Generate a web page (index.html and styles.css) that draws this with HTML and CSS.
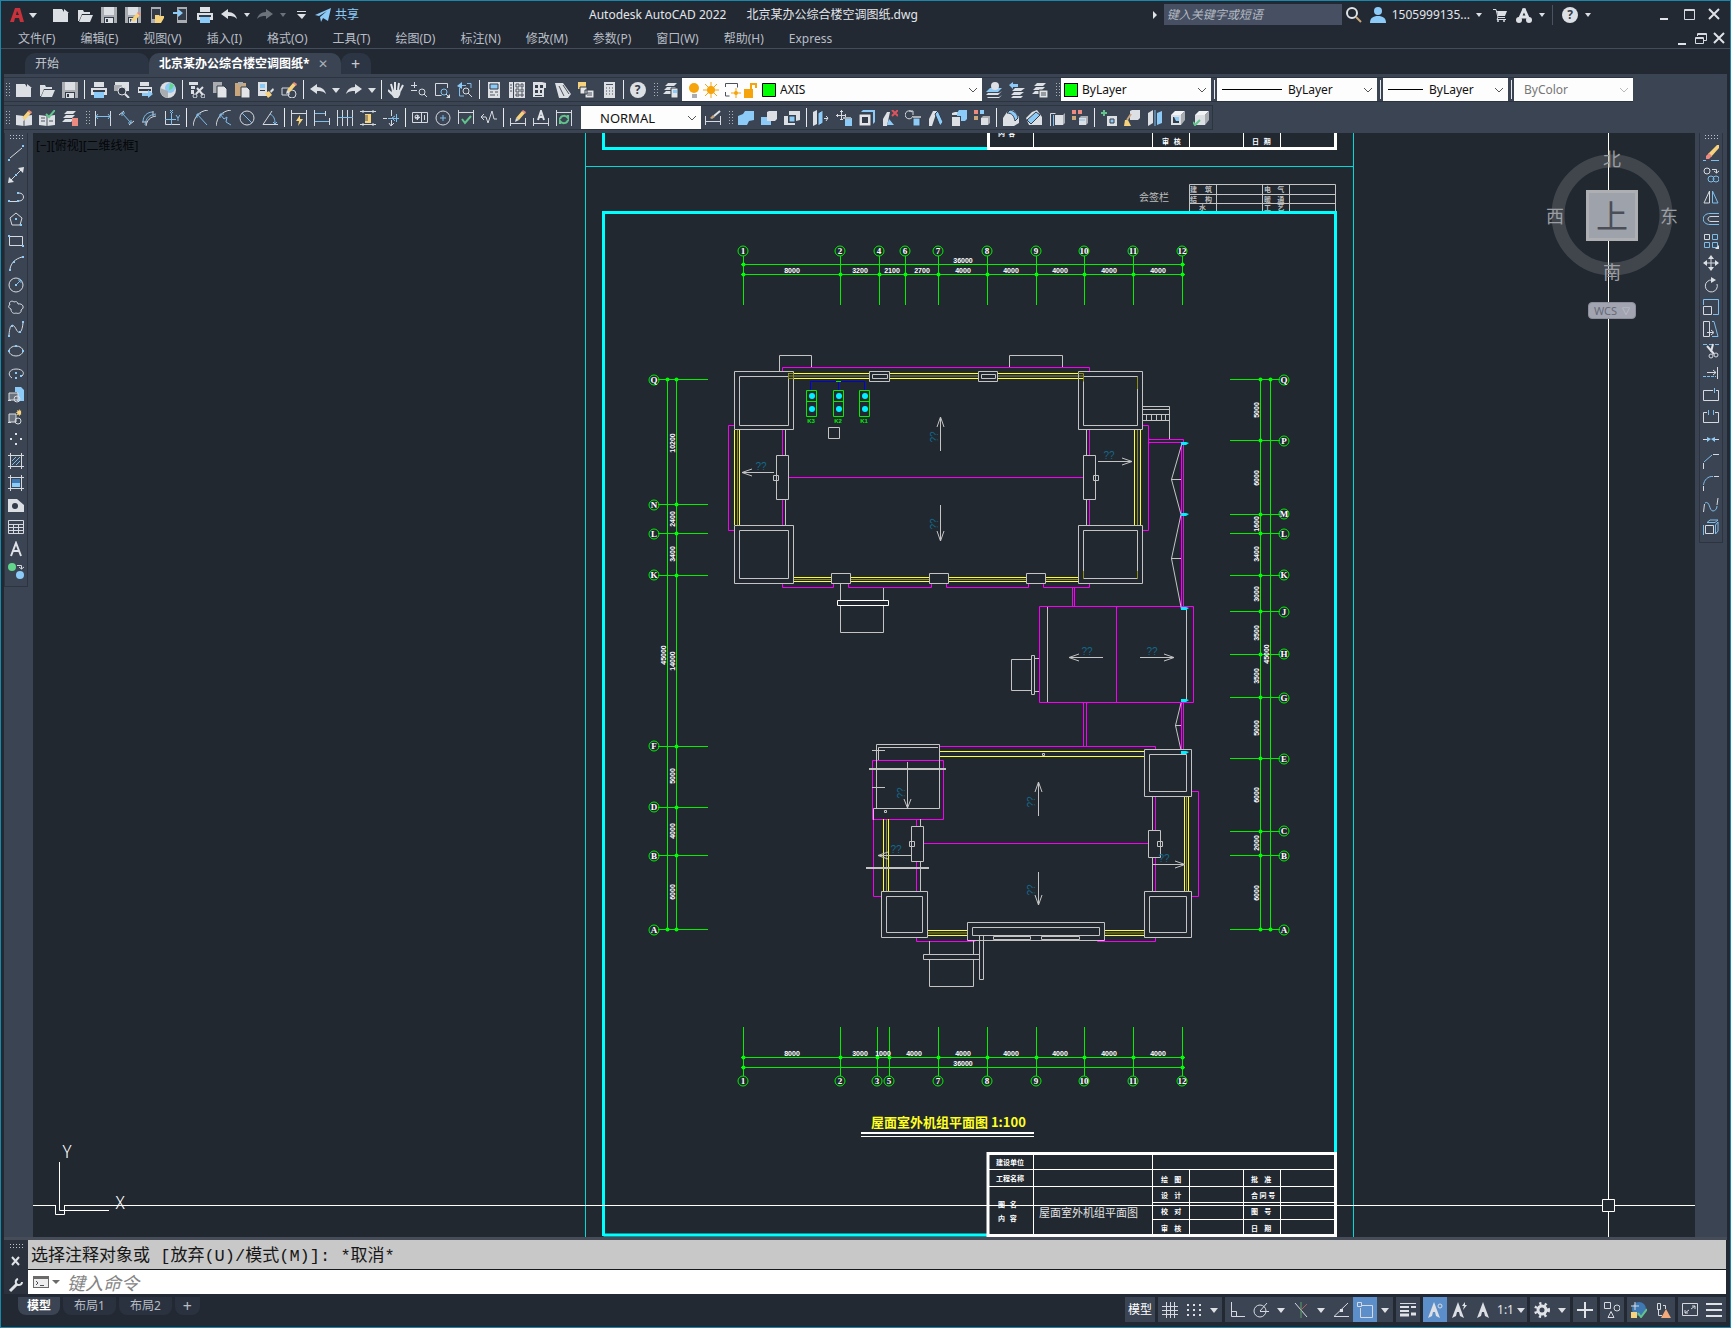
FILE: index.html
```html
<!DOCTYPE html>
<html lang="zh-CN">
<head>
<meta charset="utf-8">
<title>Autodesk AutoCAD 2022</title>
<link rel="stylesheet" href="styles.css">
</head>
<body>
<svg class="defs" aria-hidden="true">
  <symbol id="new"><path class="wf" d="M0 2h9l2 3 4 1v9H0z"/><path class="wf" d="M11 2l5 4h-5z"/></symbol>
  <symbol id="open"><path class="wf" d="M1 14V3h5l1 2h6v2H5L2 14z"/><path class="wf" d="M5 8h11l-3 7H2z"/></symbol>
  <symbol id="save"><path class="gf" d="M0 0h16v16H0z"/><path class="wf" d="M3 0h10v8H3z"/><path class="df" d="M3 10h10v6H3z"/><path class="wf" d="M4 11h8v5H4z"/><path class="df" d="M5 12h2v3H5z"/></symbol>
  <symbol id="print"><path class="wf" d="M3 0h10v5H3zM0 6h16v7H0z"/><path class="df" d="M2 8h12v2H2z"/><path class="bf" d="M3 10h10v6H3z"/></symbol>
  <symbol id="undo"><path class="wf" d="M0 7l7-5v3c5 0 8 3 9 7-3-3-5-3-9-3v3z"/></symbol>
  <symbol id="redo"><path class="wf" d="M16 7L9 2v3c-5 0-8 3-9 7 3-3 5-3 9-3v3z"/></symbol>
  <symbol id="caret"><path class="wf" d="M0 6h8l-4 5z"/></symbol>
  <symbol id="caretsm"><path class="wf" d="M0 4h6l-3 4z"/></symbol>
  <symbol id="chev"><path class="chevline" d="M0 5l4 4 4-4"/></symbol>
  <symbol id="cube"><path class="wf" d="M1 5h10v10H1z"/><path class="sf" d="M1 5l4-4h10l-4 4z"/><path class="gf" d="M11 5l4-4v9l-4 5z"/></symbol>
  <symbol id="smallcube"><path class="wf" d="M7 8h7v7H7z"/><path class="gf" d="M7 8l2-2h7l-2 2zM14 8l2-2v7l-2 2z"/></symbol>
  <symbol id="layers"><path class="wf" d="M5 1h9l-3 3H2zM4 5h9l-3 3H1zM3 9h9l-3 3H0z"/></symbol>
  <symbol id="pencil"><path class="yf" d="M6 8l6-7 3 2-6 7z"/><path class="rf" d="M12 1l1-1 3 2-1 2z"/><path class="wf" d="M6 8l3 2-4 2z"/></symbol>
  <symbol id="spark"><path class="yf" d="M10 0l1 3 3-1-1 3 3 1-3 1 1 3-3-1-1 3-1-3-3 1 1-3-3-1 3-1-1-3 3 1z"/></symbol>
  <symbol id="annot"><path class="wf" d="M8 0l6 16-4-2-1-4H7l-1 4-4 2z"/></symbol>
</svg>

<div class="app">
<header class="titlebar">
  <div class="quick">
    <button class="logo" aria-label="应用程序菜单"><svg class="ic"><path class="logoa" d="M1 15L6 1h5l4 14h-4l-1-4H6l-1 4zM7 8h3L8 4z"/></svg><svg class="ca"><use href="#caret"/></svg></button>
    <button class="q" aria-label="新建"><svg class="ic"><use href="#new"/></svg></button>
    <button class="q" aria-label="打开"><svg class="ic"><use href="#open"/></svg></button>
    <button class="q" aria-label="保存"><svg class="ic"><use href="#save"/></svg></button>
    <button class="q" aria-label="另存为"><svg class="ic"><use href="#save"/><use href="#pencil" y="5"/></svg></button>
    <button class="q" aria-label="从移动设备打开"><svg class="ic"><path class="gf" d="M2 0h10v16H2z"/><path class="df" d="M3 2h8v10H3z"/><path class="yf" d="M6 8h4l1 1h4v2l-3 5H6z"/></svg></button>
    <button class="q" aria-label="保存到移动设备"><svg class="ic"><path class="gf" d="M4 0h10v16H4z"/><path class="df" d="M5 2h8v11H5z"/><path class="bf" d="M0 5h5V2l5 4-5 4V7H0z"/></svg></button>
    <button class="q" aria-label="打印"><svg class="ic"><use href="#print"/></svg></button>
    <button class="q" aria-label="放弃"><svg class="ic"><use href="#undo"/></svg></button>
    <button class="qc" aria-label="放弃列表"><svg class="ca sm"><use href="#caretsm"/></svg></button>
    <button class="q dim-icon" aria-label="重做"><svg class="ic"><use href="#redo"/></svg></button>
    <button class="qc dim-icon" aria-label="重做列表"><svg class="ca sm"><use href="#caretsm"/></svg></button>
    <button class="q" aria-label="自定义"><svg class="ic"><path class="wf" d="M4 4h9v1H4zM4 7h9l-4 5z"/></svg></button>
    <button class="share"><svg class="ic"><path class="bf" d="M0 8L16 1l-3 13-5-3-2 4-1-5 7-6-8 5z"/></svg>共享</button>
  </div>
  <h1 class="title"><span>Autodesk AutoCAD 2022</span><span>北京某办公综合楼空调图纸.dwg</span></h1>
  <div class="account">
    <span class="play"></span>
    <input class="search" type="text" aria-label="搜索" placeholder="键入关键字或短语">
    <button class="q" aria-label="查找"><svg class="ic"><circle class="ln2" cx="6" cy="6" r="5"/><path class="tan" d="M10 10l5 5"/></svg></button>
    <button class="user"><svg class="ic"><circle class="bf" cx="8" cy="4" r="4"/><path class="bf" d="M0 16c0-5 3-7 8-7s8 2 8 7z"/></svg>1505999135...<svg class="ca sm"><use href="#caretsm"/></svg></button>
    <button class="q" aria-label="购物车"><svg class="ic"><path class="ln1" d="M1 2.500h3l2 8h7"/><path class="wf" d="M5 4h10l-2 5H6z"/><path class="ln1" d="M6 10l-1 2.500h9"/><circle class="wf" cx="6" cy="14" r="1"/><circle class="wf" cx="12" cy="14" r="1"/></svg></button>
    <button class="q" aria-label="Autodesk App Store"><svg class="ic"><path class="ln3" d="M8 2L3 13M8 2l5 11M4 10h7"/><circle class="wf" cx="8" cy="3" r="2"/><circle class="wf" cx="3" cy="13" r="3"/><circle class="wf" cx="13" cy="13" r="3"/></svg></button>
    <button class="qc" aria-label="应用列表"><svg class="ca sm"><use href="#caretsm"/></svg></button>
    <span class="vline"></span>
    <button class="q" aria-label="帮助"><span class="help">?</span></button>
    <button class="qc" aria-label="帮助列表"><svg class="ca sm"><use href="#caretsm"/></svg></button>
  </div>
  <div class="winctl">
    <button aria-label="最小化"><svg class="ic"><path class="ln2" d="M2 12h8"/></svg></button>
    <button aria-label="最大化"><svg class="ic"><path class="ln1" d="M2.500 2.500h10v10h-10zM2 3.500h11"/></svg></button>
    <button aria-label="关闭"><svg class="ic"><path class="ln2" d="M3 2l10 10M13 2L3 12"/></svg></button>
  </div>
</header>
<nav class="menubar">
  <a href="#">文件(F)</a><a href="#">编辑(E)</a><a href="#">视图(V)</a><a href="#">插入(I)</a><a href="#">格式(O)</a><a href="#">工具(T)</a><a href="#">绘图(D)</a><a href="#">标注(N)</a><a href="#">修改(M)</a><a href="#">参数(P)</a><a href="#">窗口(W)</a><a href="#">帮助(H)</a><a href="#">Express</a>
  <div class="docctl">
    <button aria-label="最小化文档"><svg class="ic"><path class="ln2" d="M3 13h8"/></svg></button>
    <button aria-label="还原文档"><svg class="ic"><path class="ln1" d="M4.500 5V2.500h9v7H11M2.500 6.500h8v6h-8zM2 7.500h9M4 3.500h10"/></svg></button>
    <button aria-label="关闭文档"><svg class="ic"><path class="ln2" d="M3 2l10 10M13 2L3 12"/></svg></button>
  </div>
</nav>
<div class="tabs">
  <button class="tab">开始</button>
  <button class="tab on">北京某办公综合楼空调图纸*<span class="x">✕</span></button>
  <button class="tab add" aria-label="新图形">+</button>
</div>

<div class="bars">
  <div class="bar">
    <span class="grip"></span>
    <button class="t" aria-label="新建"><svg class="ic"><use href="#new"/></svg></button>
    <button class="t" aria-label="打开"><svg class="ic"><use href="#open"/></svg></button>
    <button class="t" aria-label="保存"><svg class="ic"><use href="#save"/></svg></button>
    <span class="sep"></span>
    <button class="t" aria-label="打印"><svg class="ic"><use href="#print"/></svg></button>
    <button class="t" aria-label="打印预览"><svg class="ic"><path class="wf" d="M1 0h14v9H1z"/><path class="gf" d="M0 3h8v6H0z"/><circle class="dfs" cx="8" cy="9" r="4"/><path class="ln2" d="M11 12l4 4"/></svg></button>
    <button class="t" aria-label="发布"><svg class="ic"><path class="wf" d="M3 0h9v4H3zM1 5h14v6H1z"/><path class="df" d="M2 7h12v2H2z"/><path class="bf" d="M5 11h6V8l5 4-5 4v-2H5z"/></svg></button>
    <button class="t" aria-label="三维打印"><svg class="ic"><circle class="wf" cx="8" cy="8" r="8"/><circle class="bf" cx="10" cy="6" r="5"/><path class="grn" d="M10 1l4 2-2 4-3 1z"/><path class="gf" d="M0 6l8 3v7C3 15 0 12 0 6z"/></svg></button>
    <span class="sep"></span>
    <button class="t" aria-label="剪切"><svg class="ic"><path class="wf" d="M0 0h9v3H0zM2 4h4v3H2zM2 8h3v4H2z"/><path class="ln2" d="M8 6l6 7M14 5L7 12"/><circle class="ln1" cx="6" cy="14" r="2"/><circle class="ln1" cx="14" cy="14" r="2"/></svg></button>
    <button class="t" aria-label="复制"><svg class="ic"><path class="gf" d="M1 0h9v11H1z"/><path class="wfd" d="M5 4h7l3 3v9H5z"/></svg></button>
    <button class="t" aria-label="粘贴"><svg class="ic"><path class="tanf" d="M0 1h11v13H0z"/><path class="gf" d="M3 0h5v3H3z"/><path class="wfd" d="M6 5h6l3 3v8H6z"/></svg></button>
    <button class="t" aria-label="特性匹配"><svg class="ic"><path class="wf" d="M0 0h9v14H0z"/><path class="bf" d="M2 2h5v4H2z"/><path class="df" d="M2 8h5v1H2z"/><path class="yf" d="M7 11l4-2 3 4-4 3z"/><path class="wf" d="M12 9l3-3 1 2-3 3z"/></svg></button>
    <button class="t" aria-label="块编辑器"><svg class="ic"><path class="ln1" d="M1 6h7v7H1z"/><circle class="ln1" cx="11" cy="12" r="4"/><use href="#pencil"/></svg></button>
    <span class="sep"></span>
    <button class="t" aria-label="放弃"><svg class="ic"><use href="#undo"/></svg></button>
    <button class="tc" aria-label="放弃列表"><svg class="ca"><use href="#caret"/></svg></button>
    <button class="t" aria-label="重做"><svg class="ic"><use href="#redo"/></svg></button>
    <button class="tc" aria-label="重做列表"><svg class="ca"><use href="#caret"/></svg></button>
    <span class="sep"></span>
    <button class="t" aria-label="平移"><svg class="ic"><path class="ln2" d="M5 9L3 2M7 8V0M10 8l1-7M12 9l3-6M4 12L0 8"/><path class="wf" d="M4 8h9l-1 5-2 3H6l-3-4z"/></svg></button>
    <button class="t" aria-label="实时缩放"><svg class="ic"><path class="ln1" d="M0 3.500h6M3.500 0v6M0 8.500h6"/><circle class="ln1" cx="11" cy="10" r="3"/><path class="ln1" d="M13 12l3 3"/></svg></button>
    <button class="t" aria-label="窗口缩放"><svg class="ic"><path class="ln1" d="M13.500 6V1.500h-12v12h6"/><circle class="bl" cx="10" cy="10" r="3"/><path class="ln1" d="M12 12l2 2"/><path class="wf" d="M16 12v4h-4z"/></svg></button>
    <button class="t" aria-label="缩放上一个"><svg class="ic"><path class="bl" d="M2.500 6v8H7M10 1.500h4V6M2 3.500h7"/><path class="bf" d="M0 4l5-4v7z"/><circle class="ln1" cx="9" cy="9" r="3"/><path class="ln1" d="M11 11l4 4"/></svg></button>
    <span class="sep"></span>
    <button class="t" aria-label="特性"><svg class="ic"><path class="wf" d="M2 0h12v16H2z"/><path class="bfd" d="M4 2h8v5H4z"/><path class="dk" d="M4 10h3M9 10h3M4 13h5M11 13h1"/></svg></button>
    <button class="t" aria-label="设计中心"><svg class="ic"><path class="wf" d="M0 0h4v16H0zM5 0h11v16H5z"/><path class="dk" d="M7 2h3v3H7zM12 2h2v3h-2zM7 7h3v3H7zM12 7h2v3h-2zM7 12h3v2H7zM12 12h2v2h-2zM1 3h2M1 6h2M1 9h2"/></svg></button>
    <button class="t" aria-label="工具选项板"><svg class="ic"><path class="wf" d="M1 0h9l4 1v5h-2v9H1z"/><path class="df" d="M3 3h3v3H3zM8 3h3v3H8zM3 8h3v3H3zM8 8h2v3H8zM3 13h7v1H3z"/></svg></button>
    <button class="t" aria-label="图纸集"><svg class="ic"><path class="wf" d="M0 1h8l8 11-3 4H4z"/><path class="dk" d="M8 3l6 9M4 4l5 10"/></svg></button>
    <button class="t" aria-label="标记集"><svg class="ic"><path class="yf" d="M0 0h8v7H0z"/><path class="wfd" d="M2 5h7v7H2zM7 8h9v8H7z"/><path class="dk" d="M9 11h5M9 13h5"/></svg></button>
    <button class="t" aria-label="计算器"><svg class="ic"><path class="wf" d="M3 0h11v16H3z"/><path class="dk" d="M5 2.500h7M5 6h1M8 6h1M11 6h1M5 9h1M8 9h1M11 9h1M5 12h1M8 12h1M11 12h1"/></svg></button>
    <span class="sep"></span>
    <button class="t" aria-label="帮助"><span class="help">?</span></button>
    <span class="grip wide"></span>
    <button class="t" aria-label="图层特性"><svg class="ic"><use href="#layers"/><path class="wfd" d="M8 6h7v10H8z"/><path class="bf" d="M10 8h4v3h-4z"/></svg></button>
    <div class="combo layer">
      <svg class="lic" aria-hidden="true"><circle class="or" cx="8" cy="6" r="5"/><path class="gf" d="M6 12h5v4H6z"/><circle class="or" cx="25" cy="8" r="4"/><path class="ors" d="M25 0v16M17 8h16M19 2l12 12M31 2L19 14"/><path class="dk" d="M39.500 5v-3.500h3M48 1.500h3.500v4M39.500 10v4h4M41 1.500h8"/><circle class="or" cx="50" cy="11" r="2"/><path class="ors" d="M50 6v10M45 11h10"/><path class="or" d="M58 7h9v9h-9z"/><path class="ors2" d="M65 7V2h5v4"/><path class="swatch" d="M76.500 1.500h13v13h-13z"/></svg>
      <select aria-label="图层"><option>AXIS</option></select><svg class="ch"><use href="#chev"/></svg>
    </div>
    <button class="t" aria-label="置为当前图层"><svg class="ic"><path class="bf" d="M4 6h12l-4 4H0z"/><circle class="wf" cx="9" cy="4" r="4"/><path class="wf" d="M2 11h11l3-2-4 4H0zM2 15h11l3-2-4 4H0z"/></svg></button>
    <button class="t" aria-label="上一个图层"><svg class="ic"><path class="bf" d="M0 3l4-3v2h5v3H4v2z"/><path class="wf" d="M6 6h10l-4 3H3zM5 10h10l-4 3H2zM4 14h10l-2 2H2z"/></svg></button>
    <button class="t" aria-label="图层状态"><svg class="ic"><use href="#layers"/><path class="wfd" d="M7 8h9v8H7z"/><path class="dk" d="M9 11h5M9 13h5"/></svg></button>
    <span class="grip wide"></span>
    <div class="combo color"><span class="sw"></span><select aria-label="颜色"><option>ByLayer</option></select><svg class="ch"><use href="#chev"/></svg></div>
    <span class="split"></span>
    <div class="combo ltype"><span class="dash"></span><select aria-label="线型"><option>ByLayer</option></select><svg class="ch"><use href="#chev"/></svg></div>
    <span class="split"></span>
    <div class="combo lweight"><span class="dash"></span><select aria-label="线宽"><option>ByLayer</option></select><svg class="ch"><use href="#chev"/></svg></div>
    <span class="split"></span>
    <div class="combo plot"><select aria-label="打印样式" disabled><option>ByColor</option></select><svg class="ch"><use href="#chev"/></svg></div>
  </div>

  <div class="bar fit">
    <span class="grip"></span>
    <button class="t" aria-label="编辑参照"><svg class="ic"><path class="wf" d="M0 5l8 1 8-1v10l-8 1-8-1z"/><path class="dk" d="M8 6v10"/><use href="#pencil"/></svg></button>
    <button class="t" aria-label="保存参照"><svg class="ic"><path class="wf" d="M0 5l8 1 8-1v10l-8 1-8-1z"/><path class="dk" d="M8 6v10M2 8h4M2 11h4M10 11h4"/><path class="gs" d="M7 4l3 3 6-7"/></svg></button>
    <button class="t" aria-label="关闭参照"><svg class="ic"><use href="#layers"/><path class="rf" d="M10 8h6v8h-6z"/></svg></button>
    <span class="grip wide"></span>
    <button class="t" aria-label="线性标注"><svg class="ic"><path class="ln1" d="M.5 1v15M15.500 1v15"/><path class="bl" d="M1 6.500h14M3 4L1 6.500 3 9M13 4l2 2.500L13 9"/></svg></button>
    <button class="t" aria-label="对齐标注"><svg class="ic"><path class="ln1" d="M1 5l5-4M11 15l5-4"/><path class="bl" d="M4 3l9 10M4 6V3h3M13 10v3h-3"/></svg></button>
    <button class="t" aria-label="弧长标注"><svg class="ic"><path class="ln1" d="M1 12h5M12 1v5M5 16C6 10 9 7 15 6"/><path class="bl" d="M2 12C2 6 6 2 12 2M4 15C5 8 8 5 15 4"/></svg></button>
    <button class="t" aria-label="坐标标注"><svg class="ic"><path class="ln1" d="M1.500 1v13.500H16"/><path class="bl" d="M1 9.500h11M7.500 3v12M6 0l3 3M9 0L6 3M12 5l2 3 2-3M14 8v3"/></svg></button>
    <span class="sep"></span>
    <button class="t" aria-label="半径标注"><svg class="ic"><path class="ln1" d="M15 0C6 1 1 7 0 16"/><path class="bl" d="M4 4l10 11M4 8V4h4"/></svg></button>
    <button class="t" aria-label="折弯标注"><svg class="ic"><path class="ln1" d="M15 0C6 1 1 7 0 16"/><path class="bl" d="M4 4l4 5 3-2-1 5 5 3M4 8V4h4"/></svg></button>
    <button class="t" aria-label="直径标注"><svg class="ic"><circle class="ln1" cx="8" cy="8" r="7"/><path class="bl" d="M3 3l10 10"/></svg></button>
    <button class="t" aria-label="角度标注"><svg class="ic"><path class="ln1" d="M10 1L1 14.500h15"/><path class="bl" d="M8 4c4 2 5 5 5 10M11 12l2 2 2-2"/></svg></button>
    <span class="sep"></span>
    <button class="t" aria-label="快速标注"><svg class="ic"><path class="ln1" d="M.5 0v16M15.500 0v16M1 3.500h14"/><path class="yf" d="M9 5L5 11h3l-1 5 5-7H9z"/></svg></button>
    <button class="t" aria-label="基线标注"><svg class="ic"><path class="ln1" d="M.5 0v16M11.500 1v5M15.500 8v7"/><path class="bl" d="M1 3.500h10M1 11.500h14"/></svg></button>
    <button class="t" aria-label="连续标注"><svg class="ic"><path class="ln1" d="M.5 0v16M5.500 0v16M10.500 0v16M15.500 0v16"/><path class="bl" d="M1 7.500h15"/></svg></button>
    <button class="t" aria-label="等距标注"><svg class="ic"><path class="ln1" d="M0 1.500h16M0 14.500h16M3 0v3M13 0v3M3 13v3M13 13v3"/><path class="yf" d="M5 4h6v9H5z"/><path class="dk" d="M5 6h3M5 8h3M5 10h3"/></svg></button>
    <button class="t" aria-label="折断标注"><svg class="ic"><path class="ln1" d="M8.500 0v6M8.500 10v6M6 13l2 3 3-3M0 8.500h4"/><path class="bl" d="M5 8.500h11M13.500 4v8M12 6l-3 2 3 3"/></svg></button>
    <span class="sep"></span>
    <button class="t" aria-label="公差"><svg class="ic"><path class="ln1" d="M.5 2.500h15v10H.5zM9.500 2v10M3 7.500h5M5.500 5v5M12.500 5v5"/><circle class="ln1" cx="5" cy="7" r="2"/></svg></button>
    <button class="t" aria-label="圆心标记"><svg class="ic"><circle class="ln1" cx="8" cy="8" r="7"/><path class="bl" d="M8 5v6M5 8h6"/></svg></button>
    <button class="t" aria-label="检验"><svg class="ic"><path class="ln1" d="M.5 0v14M15.500 0v14M1 2.500h14"/><path class="gs" d="M4 9l3 4 6-7"/></svg></button>
    <button class="t" aria-label="折弯线性"><svg class="ic"><path class="ln1" d="M0 7h5l2 6 4-12 2 8h3M3 4L0 7l3 3"/></svg></button>
    <span class="sep"></span>
    <button class="t" aria-label="编辑标注"><svg class="ic"><path class="ln1" d="M.5 8v8M15.500 8v8M1 13.500h14"/><use href="#pencil"/></svg></button>
    <button class="t" aria-label="编辑标注文字"><svg class="ic"><path class="ln1" d="M.5 8v8M15.500 8v8M1 13.500h14"/><path class="ln2" d="M5 10l3-9 3 9M6 7h4"/></svg></button>
    <button class="t" aria-label="标注更新"><svg class="ic"><path class="ln1" d="M.5 0v16M15.500 0v16M1 2.500h14"/><path class="gs" d="M4 9c1-4 6-4 8-1V5M12 10c-1 4-6 4-8 1v3"/></svg></button>
    <div class="combo dimstyle"><select aria-label="标注样式"><option>NORMAL</option></select><svg class="ch"><use href="#chev"/></svg></div>
    <button class="t" aria-label="标注样式管理"><svg class="ic"><path class="ln1" d="M.5 6v9M15.500 6v9M1 11.500h14"/><path class="tanf" d="M5 8l3-3 2 2-3 2z"/><path class="ln2" d="M9 6l6-5"/></svg></button>
    <span class="grip wide"></span>
    <button class="t" aria-label="并集"><svg class="ic"><path class="bf" d="M0 6l5-2 2-3h9v9l-5 1-2 4H0z"/></svg></button>
    <button class="t" aria-label="差集"><svg class="ic"><path class="bf" d="M0 7h6v4h4v4H0z"/><path class="wf" d="M6 2l2-1h8v8l-2 2H6z"/></svg></button>
    <button class="t" aria-label="交集"><svg class="ic"><path class="wf" d="M5 1h11v9l-4 1V5H5zM0 6h4v7h7v2H0z"/><path class="bfd" d="M5 6h6v6H5z"/></svg></button>
    <span class="sep"></span>
    <button class="t" aria-label="拉伸面"><svg class="ic"><path class="wf" d="M0 2l4-2v14l-4 2z"/><path class="bfd" d="M5 3l5-3v13l-5 3z"/><path class="ln1" d="M11 8.500h4M13 6l2 2-2 3"/></svg></button>
    <button class="t" aria-label="移动面"><svg class="ic"><path class="ln1" d="M5.500 0v10M0 5.500h10M4 1.500h3M1.500 4v3M9.500 4v3M4 9.500h3"/><path class="bf" d="M9 8h7v8H9z"/><path class="gf" d="M7 7h8v2H7z"/></svg></button>
    <button class="t" aria-label="偏移面"><svg class="ic"><path class="wfd" d="M0 4h12v12H0z"/><path class="df" d="M3 7h6v6H3z"/><path class="bf" d="M2 2l2-2h12v12l-2 2V2z"/></svg></button>
    <button class="t" aria-label="删除面"><svg class="ic"><path class="wf" d="M1 9l4-7h3l-3 14H1z"/><path class="bf" d="M7 9l5 6H5z"/><path class="rs" d="M10 0l6 6M16 0l-6 6"/></svg></button>
    <button class="t" aria-label="旋转面"><svg class="ic"><path class="ln1" d="M7 2a4 4 0 1 0 1 4M4 1h4v4"/><path class="bfd" d="M8 8h7v8H8z"/><path class="gf" d="M8 6h8v2H8z"/></svg></button>
    <button class="t" aria-label="倾斜面"><svg class="ic"><path class="wf" d="M1 9l4-8h4l-5 15H1z"/><path class="bfd" d="M7 4l3-3 5 11-3 4z"/></svg></button>
    <button class="t" aria-label="复制面"><svg class="ic"><path class="wf" d="M4 2h4L6 5H1V3zM1 7h8v9H1z"/><path class="bf" d="M6 3l2-3h8v9l-2 2h-4V6H6z"/></svg></button>
    <button class="t" aria-label="着色面"><svg class="ic"><path class="rf" d="M0 0h4v4H0z"/><path class="bf" d="M6 0h4v4H6z"/><path class="tanf" d="M0 6h4v4H0z"/><use href="#smallcube"/></svg></button>
    <span class="sep"></span>
    <button class="t" aria-label="圆角边"><svg class="ic"><path class="wf" d="M0 8l4-6 6-2 6 7v6l-5 3H0z"/><path class="bfd" d="M4 3c5 0 7 3 8 8l3-3C14 3 11 1 7 0z"/></svg></button>
    <button class="t" aria-label="倒角边"><svg class="ic"><path class="wf" d="M0 8l6-6 5-2 5 7v8H3z"/><path class="bfd" d="M1 10l9-8 4 3-9 9z"/></svg></button>
    <button class="t" aria-label="复制边"><svg class="ic"><path class="ln1" d="M1.500 16V3.500h5"/><path class="bl" d="M4.500 16V5"/><path class="wf" d="M6 5h8v10H6z"/><path class="gf" d="M14 5l2-2v10l-2 2z"/></svg></button>
    <button class="t" aria-label="着色边"><svg class="ic"><path class="rf" d="M0 0h4v4H0zM6 0h4v4H6z"/><path class="tanf" d="M0 6h4v4H0z"/><use href="#smallcube"/><path class="bl" d="M7 10h6"/></svg></button>
    <span class="sep"></span>
    <button class="t" aria-label="压印"><svg class="ic"><path class="gs" d="M3 0v6M0 3h6"/><path class="wf" d="M6 6h10v10H6z"/><path class="bfd" d="M9 9h4v4H9z"/></svg></button>
    <button class="t" aria-label="清除"><svg class="ic"><path class="wf" d="M6 1l2-1h8v8l-2 2H6z"/><path class="yf" d="M1 10h3l3 6H0z"/><path class="tan" d="M3 10l4-6"/></svg></button>
    <button class="t" aria-label="分割"><svg class="ic"><path class="wf" d="M1 3l5-3v13l-5 3z"/><path class="bl" d="M8 0v16"/><path class="bf" d="M10 3l5-2v12l-5 2z"/></svg></button>
    <button class="t" aria-label="抽壳"><svg class="ic"><use href="#cube"/><path class="df" d="M3 7h6v6H3z"/><path class="bf" d="M4 7h5v4H6z"/></svg></button>
    <button class="t" aria-label="检查"><svg class="ic"><use href="#cube" x="1"/><path class="gs" d="M0 12l2 3 5-5"/></svg></button>
  </div>
</div>

<main class="work">
  <aside class="rail left">
    <span class="hgrip"></span>
    <button class="v" aria-label="直线"><svg class="ic"><path class="ln1" d="M2 13L14 3"/><path class="bf" d="M0 14h2v2H0zM14 0h2v2h-2z"/></svg></button>
    <button class="v" aria-label="构造线"><svg class="ic"><path class="ln1" d="M1 15L15 1"/><path class="wf" d="M0 16l1-6 5 5zM16 0l-1 6-5-5z"/><path class="bf" d="M7 7h2v2H7z"/></svg></button>
    <button class="v" aria-label="多段线"><svg class="ic"><path class="ln1" d="M2 12.500h7M11 4c6 0 6 8 0 8"/><path class="bf" d="M0 11h2v2H0zM9 3h2v2H9zM9 11h2v2H9z"/></svg></button>
    <button class="v" aria-label="多边形"><svg class="ic"><path class="ln1" d="M8 2l6 5-2 7H4L2 7z"/><path class="bf" d="M7 7h2v2H7zM12 13h2v2h-2z"/></svg></button>
    <button class="v" aria-label="矩形"><svg class="ic"><path class="ln1" d="M1.500 3.500h13v9h-13z"/><path class="bf" d="M0 2h2v2H0zM14 12h2v2h-2z"/></svg></button>
    <button class="v" aria-label="圆弧"><svg class="ic"><path class="ln1" d="M2 14c1-6 5-10 12-12"/><path class="bf" d="M1 14h2v2H1zM5 6h2v2H5zM14 1h2v2h-2z"/></svg></button>
    <button class="v" aria-label="圆"><svg class="ic"><circle class="ln1" cx="8" cy="8" r="7"/><path class="bl" d="M8 8l5-5M10 3h3v3"/><path class="bf" d="M7 7h2v2H7z"/></svg></button>
    <button class="v" aria-label="修订云线"><svg class="ic"><path class="ln1" d="M3 10c-3-1-3-4-1-4-2-3 2-5 4-3 2-1 4 0 4 2 5-1 7 4 3 6 1 3-3 4-5 3-2 1-5 0-5-4z"/></svg></button>
    <button class="v" aria-label="样条曲线"><svg class="ic"><path class="ln1" d="M1 14C2 0 6 4 8 8c3 6 6 4 7-6"/><path class="bf" d="M0 14h2v2H0zM3 4h2v2H3zM11 10h2v2h-2zM14 0h2v2h-2z"/></svg></button>
    <button class="v" aria-label="椭圆"><svg class="ic"><ellipse class="ln1" cx="8" cy="8" rx="7" ry="5"/><path class="bf" d="M0 7h2v2H0zM14 7h2v2h-2zM7 2h2v2H7z"/></svg></button>
    <button class="v" aria-label="椭圆弧"><svg class="ic"><path class="ln1" d="M4 13C-1 10 1 4 8 4s9 4 6 7"/><path class="bf" d="M7 7h2v2H7zM7 12h2v2H7zM12 10h2v2h-2z"/></svg></button>
    <button class="v" aria-label="插入块"><svg class="ic"><path class="bf" d="M7 0h6l3 3v11H9V5H7z"/><path class="fillbox" d="M1 6h9v7H1z"/><path class="ln1" d="M0 13.500h3"/><circle class="ln1" cx="9" cy="12" r="3"/></svg></button>
    <button class="v" aria-label="创建块"><svg class="ic"><path class="fillbox" d="M1 5h7v8H1z"/><path class="ln1" d="M0 13.500h3"/><circle class="ln1" cx="10" cy="12" r="3"/><svg x="6" y="0" width="10" height="8" viewBox="3 0 13 13"><use href="#spark"/></svg></svg></button>
    <button class="v" aria-label="点"><svg class="ic"><path class="wf" d="M7 2h2v2H7zM2 7h2v2H2zM12 7h2v2h-2zM7 12h2v2H7z"/></svg></button>
    <button class="v" aria-label="图案填充"><svg class="ic"><path class="ln1" d="M0 2.500h16M0 13.500h16M2.500 0v16M13.500 0v16"/><path class="bl" d="M4 8l4-4M4 12l8-8M8 12l4-4"/></svg></button>
    <button class="v" aria-label="渐变色"><svg class="ic"><path class="ln1" d="M0 2.500h16M0 13.500h16M2.500 0v16M13.500 0v16"/><path class="bd" d="M4 4h8v4H4z"/><path class="bf" d="M4 8h8v4H4z"/></svg></button>
    <button class="v" aria-label="面域"><svg class="ic"><path class="wf" d="M0 2h9l7 6v7H0z"/><circle class="df" cx="7" cy="9" r="3"/></svg></button>
    <button class="v" aria-label="表格"><svg class="ic"><path class="ln1" d="M.5 1.500h15v13H.5zM0 5.500h16M0 8.500h16M0 11.500h16M5.500 5v10M10.500 5v10"/></svg></button>
    <button class="v" aria-label="多行文字"><svg class="ic"><path class="ln2" d="M3 15L8 2l5 13M5 10h6"/></svg></button>
    <button class="v" aria-label="添加选定对象"><svg class="ic"><circle class="grn" cx="4" cy="4" r="4"/><circle class="bf" cx="12" cy="12" r="4"/><path class="ln1" d="M9 2.500h4.500V6M11 4l2.500 2L16 4"/></svg></button>
  </aside>

  <section class="canvas">
    <svg class="drawing" viewBox="33 133 1662 1104" preserveAspectRatio="xMidYMid slice">
      <!-- sheet borders -->
      <path class="cy" d="M585.500 133V1237M1353.500 133V1237M585 166.500H1354"/>
      <path class="cy thick" d="M603.500 133V148.500H988M603.500 1235H988M603.500 1236V212.500H1335.500V1153"/>
      <path class="wh thick" d="M988.500 133V148.500H1335.500V133M988 1153.500H1335.500V1235.500H988z"/>
      <path class="wh" d="M1033.500 133V148M1152.500 133V148M1189.500 133V148M1243.500 133V148M1280.500 133V148"/>
      <path class="wh" d="M988 1169.500H1336M988 1186.500H1336M1152 1202.500H1336M1152 1219.500H1336M1033.500 1153V1235M1152.500 1153V1235M1189.500 1169V1235M1243.500 1169V1235M1280.500 1169V1235"/>
      <path class="gy" d="M1189.500 211V184.500H1335.500V211M1189 194.500H1336M1189 203.500H1336M1216.500 184V211M1262.500 184V211M1289.500 184V211"/>
      <g class="cell"><text x="1162" y="144">审&#160;&#160;&#160;核</text><text x="1252" y="144">日&#160;&#160;&#160;期</text><text x="998" y="136">内&#160;&#160;容</text>
      <text x="996" y="1165">建设单位</text><text x="996" y="1181">工程名称</text><text x="998" y="1207">图&#160;&#160;&#160;名</text><text x="998" y="1221">内&#160;&#160;&#160;容</text>
      <text x="1161" y="1182">绘&#160;&#160;&#160;&#160;图</text><text x="1161" y="1198">设&#160;&#160;&#160;&#160;计</text><text x="1161" y="1214">校&#160;&#160;&#160;&#160;对</text><text x="1161" y="1231">审&#160;&#160;&#160;&#160;核</text>
      <text x="1251" y="1182">批&#160;&#160;&#160;&#160;准</text><text x="1251" y="1198">合 同 号</text><text x="1251" y="1214">图&#160;&#160;&#160;&#160;号</text><text x="1251" y="1231">日&#160;&#160;&#160;&#160;期</text></g>
      <g class="cell soft"><text x="1190" y="192">建&#160;&#160;&#160;&#160;&#160;筑</text><text x="1190" y="202">结&#160;&#160;&#160;&#160;&#160;构</text><text x="1199" y="210">水</text><text x="1264" y="192">电&#160;&#160;&#160;&#160;气</text><text x="1264" y="202">暖&#160;&#160;&#160;&#160;通</text><text x="1264" y="210">工&#160;&#160;&#160;&#160;艺</text></g>
      <text class="sign" x="1139" y="201">会签栏</text>
      <text class="sheetname" x="1039" y="1217">屋面室外机组平面图</text>

      <!-- axis grid, top and bottom -->
      <path class="gr" d="M741 264.500H1185M741 274.500H1185M743.500 256V305M840.500 256V305M879.500 256V305M905.500 256V305M938.500 256V305M987.500 256V305M1036.500 256V305M1084.500 256V305M1133.500 256V305M1182.500 256V305"/>
      <path class="gr" d="M741 1057.500H1185M741 1067.500H1185M743.500 1027V1076M840.500 1027V1076M877.500 1027V1076M889.500 1027V1076M938.500 1027V1076M987.500 1027V1076M1036.500 1027V1076M1084.500 1027V1076M1133.500 1027V1076M1182.500 1027V1076"/>
      <path class="gr" d="M667.500 379V930M676.500 379V930M658 379.500H708M658 504.500H708M658 533.500H708M658 575.500H708M658 746.500H708M658 807.500H708M658 855.500H708M658 929.500H708"/>
      <path class="gr" d="M1260.500 379V930M1270.500 379V930M1230 379.500H1280M1230 440.500H1280M1230 514.500H1280M1230 533.500H1280M1230 575.500H1280M1230 611.500H1280M1230 654.500H1280M1230 697.500H1280M1230 758.500H1280M1230 831.500H1280M1230 855.500H1280M1230 929.500H1280"/>
      <path class="tick" d="M743.500 274.500h0M840.500 274.500h0M879.500 274.500h0M905.500 274.500h0M938.500 274.500h0M987.500 274.500h0M1036.500 274.500h0M1084.500 274.500h0M1133.500 274.500h0M1182.500 274.500h0M743.500 264.500h0M1182.500 264.500h0M743.500 1057.500h0M840.500 1057.500h0M877.500 1057.500h0M889.500 1057.500h0M938.500 1057.500h0M987.500 1057.500h0M1036.500 1057.500h0M1084.500 1057.500h0M1133.500 1057.500h0M1182.500 1057.500h0M743.500 1067.500h0M1182.500 1067.500h0M667.500 379.500h0M676.500 379.500h0M676.500 504.500h0M676.500 533.500h0M676.500 575.500h0M676.500 746.500h0M676.500 807.500h0M676.500 855.500h0M676.500 929.500h0M667.500 929.500h0M1260.500 379.500h0M1270.500 379.500h0M1260.500 440.500h0M1260.500 514.500h0M1260.500 533.500h0M1260.500 575.500h0M1260.500 611.500h0M1260.500 654.500h0M1260.500 697.500h0M1260.500 758.500h0M1260.500 831.500h0M1260.500 855.500h0M1260.500 929.500h0M1270.500 929.500h0"/>
      <g class="bub">
        <circle cx="743" cy="251" r="5"/><circle cx="840" cy="251" r="5"/><circle cx="879" cy="251" r="5"/><circle cx="905" cy="251" r="5"/><circle cx="938" cy="251" r="5"/><circle cx="987" cy="251" r="5"/><circle cx="1036" cy="251" r="5"/><circle cx="1084" cy="251" r="5"/><circle cx="1133" cy="251" r="5"/><circle cx="1182" cy="251" r="5"/>
        <circle cx="743" cy="1081" r="5"/><circle cx="840" cy="1081" r="5"/><circle cx="877" cy="1081" r="5"/><circle cx="889" cy="1081" r="5"/><circle cx="938" cy="1081" r="5"/><circle cx="987" cy="1081" r="5"/><circle cx="1036" cy="1081" r="5"/><circle cx="1084" cy="1081" r="5"/><circle cx="1133" cy="1081" r="5"/><circle cx="1182" cy="1081" r="5"/>
        <circle cx="654" cy="380" r="5"/><circle cx="654" cy="505" r="5"/><circle cx="654" cy="534" r="5"/><circle cx="654" cy="575" r="5"/><circle cx="654" cy="746" r="5"/><circle cx="654" cy="807" r="5"/><circle cx="654" cy="856" r="5"/><circle cx="654" cy="930" r="5"/>
        <circle cx="1284" cy="380" r="5"/><circle cx="1284" cy="441" r="5"/><circle cx="1284" cy="514" r="5"/><circle cx="1284" cy="534" r="5"/><circle cx="1284" cy="575" r="5"/><circle cx="1284" cy="612" r="5"/><circle cx="1284" cy="654" r="5"/><circle cx="1284" cy="698" r="5"/><circle cx="1284" cy="759" r="5"/><circle cx="1284" cy="831" r="5"/><circle cx="1284" cy="856" r="5"/><circle cx="1284" cy="930" r="5"/>
      </g>
      <g class="axis">
        <text x="743" y="254">1</text><text x="840" y="254">2</text><text x="879" y="254">4</text><text x="905" y="254">6</text><text x="938" y="254">7</text><text x="987" y="254">8</text><text x="1036" y="254">9</text><text x="1084" y="254">10</text><text x="1133" y="254">11</text><text x="1182" y="254">12</text>
        <text x="743" y="1084">1</text><text x="840" y="1084">2</text><text x="877" y="1084">3</text><text x="889" y="1084">5</text><text x="938" y="1084">7</text><text x="987" y="1084">8</text><text x="1036" y="1084">9</text><text x="1084" y="1084">10</text><text x="1133" y="1084">11</text><text x="1182" y="1084">12</text>
        <text x="654" y="383">Q</text><text x="654" y="508">N</text><text x="654" y="537">L</text><text x="654" y="578">K</text><text x="654" y="749">F</text><text x="654" y="810">D</text><text x="654" y="859">B</text><text x="654" y="933">A</text>
        <text x="1284" y="383">Q</text><text x="1284" y="444">P</text><text x="1284" y="517">M</text><text x="1284" y="537">L</text><text x="1284" y="578">K</text><text x="1284" y="615">J</text><text x="1284" y="657">H</text><text x="1284" y="701">G</text><text x="1284" y="762">E</text><text x="1284" y="834">C</text><text x="1284" y="859">B</text><text x="1284" y="933">A</text>
      </g>
      <g class="dim">
        <text x="963" y="263">36000</text><text x="792" y="273">8000</text><text x="860" y="273">3200</text><text x="892" y="273">2100</text><text x="922" y="273">2700</text><text x="963" y="273">4000</text><text x="1011" y="273">4000</text><text x="1060" y="273">4000</text><text x="1109" y="273">4000</text><text x="1158" y="273">4000</text>
        <text x="963" y="1066">36000</text><text x="792" y="1056">8000</text><text x="860" y="1056">3000</text><text x="883" y="1056">1000</text><text x="914" y="1056">4000</text><text x="963" y="1056">4000</text><text x="1011" y="1056">4000</text><text x="1060" y="1056">4000</text><text x="1109" y="1056">4000</text><text x="1158" y="1056">4000</text>
        <g transform="rotate(-90)"><text x="-443" y="675">10200</text><text x="-519" y="675">2400</text><text x="-554" y="675">3400</text><text x="-661" y="675">14000</text><text x="-776" y="675">5000</text><text x="-831" y="675">4000</text><text x="-892" y="675">6000</text><text x="-655" y="666">45000</text>
        <text x="-410" y="1259">5000</text><text x="-478" y="1259">6000</text><text x="-524" y="1259">1600</text><text x="-554" y="1259">3400</text><text x="-594" y="1259">3000</text><text x="-633" y="1259">3500</text><text x="-676" y="1259">3500</text><text x="-728" y="1259">5000</text><text x="-795" y="1259">6000</text><text x="-843" y="1259">2000</text><text x="-893" y="1259">6000</text><text x="-654" y="1269">45000</text></g>
      </g>

      <!-- upper building -->
      <path class="mg" d="M782.500 372V367.500H1089.500V372M734 425.500H728.500V530.500H734M1142 425.500H1148.500V530.500H1142M782.500 430V455M782.500 500V525M1089.500 430V455M1089.500 500V525M789 477.500H1083M782.500 583V587.500H833.500V583M848.500 583V587.500H931.500V583M946.500 583V587.500H1028.500V583M1043.500 583V587.500H1089.500V583"/>
      <path class="gy" d="M779.500 372V355.500H811.500V367M1009.500 367V355.500H1062.500V367M785.500 430V525M1086.500 430V525"/>
      <path class="ye" d="M788 373.500H1083M788 378.500H1083M793 577.500H1079M793 581.500H1079M734.500 430V525M739.500 430V525M1134.500 430V525M1140.500 430V525"/>
      <path class="yeold" d="M788 376H1083M793 579.500H1079M737.500 430V525M1137.500 430V525"/>
      <path class="gy" d="M734.500 371.500h59v58h-59zM739.500 376.500h49v49h-49zM1078.500 371.500h64v58h-64zM1083.500 376.500h54v49h-54zM734.500 525.500h59v58h-59zM739.500 530.500h49v48h-49zM1078.500 525.500h64v58h-64zM1083.500 530.500h54v48h-54z"/>
      <path class="yeold" d="M788.500 373.500h5v5h-5zM1078.500 373.500h5v8M1137.500 377v12M1137.500 571v8M1083.500 571v8"/>
      <path class="gy bgf" d="M869.500 371.500h20v10h-20zM872.500 374.500h15v4h-15zM978.500 371.500h19v10h-19zM981.500 374.500h14v4h-14zM831.500 573.500h19v10h-19zM929.500 573.500h19v10h-19zM1026.500 573.500h19v10h-19zM776.500 455.500h12v44h-12zM1083.500 455.500h12v44h-12zM773.500 475.500h5v5h-5zM1093.500 475.500h5v5h-5zM828.500 427.500h11v11h-11z"/>
      <path class="gy" d="M940.500 451V418M937 427L940.500 417L944 427M940.500 505V541M937 531L940.500 541L944 531M774 472.500H742M752 469L742 472.500L752 476M1098 461.500H1132M1122 458L1132 461.500L1122 465"/>
      <path class="bu" d="M810.500 390V381.500H864.500V390M838.500 381V390"/>
      <path class="gr" d="M806.500 390.500h10v26h-10zM806 401.500h11M833.500 390.500h10v26h-10zM833 401.500h11M859.500 390.500h10v26h-10zM859 401.500h11M836 381.500h5"/>
      <g class="fan"><circle cx="812" cy="396" r="3"/><circle cx="812" cy="409" r="3"/><circle cx="839" cy="396" r="3"/><circle cx="839" cy="409" r="3"/><circle cx="865" cy="396" r="3"/><circle cx="865" cy="409" r="3"/></g>
      <g class="unit"><text x="811" y="423">K3</text><text x="838" y="423">K2</text><text x="864" y="423">K1</text></g>
      <path class="gy" d="M840.500 584V632.500H883.500V588M1142 406.500H1169.500V439M1142 409.500H1169M1142 414.500H1169M1142 420.500H1169M1146.500 414v6M1151.500 414v6M1156.500 414v6M1161.500 414v6M1165.500 414v6"/>
      <path class="wh bgf" d="M837.500 600.500h51v5h-51z"/>

      <!-- covered walk and link block -->
      <path class="mg" d="M1148 439.500H1183.500V606M1148 442.500H1181.500V606M1072.500 587V606M1074.500 587V606M1039.500 606.500h154v96h-154zM1116.500 606V702M1083.500 702V747M1086.500 702V747M1181.500 702V750M1183.500 702V750"/>
      <path class="gy" d="M1181.500 445L1171.500 479.500L1181 514.500L1171.500 558.500L1181.500 609.500H1186.500V700M1171 479.500H1181M1171 558.500H1181M1047.500 607V702M1181 703L1175.500 725.500L1181 750M1175 725.500H1181M1103 657.500H1069M1079 654L1069 657.500L1079 661M1140 657.500H1174M1164 654L1174 657.500L1164 661M1031 659.500H1011.500V690.500H1031M1031.500 655.500h3v39h-3zM1035 658.500H1039M1035 691.500H1039"/>
      <path class="cyan" d="M1181 442h5l3 1-3 2h-5zM1181 513h5l3 1-3 2h-5zM1181 607h5l3 1-3 2h-5zM1181 699h5l3 1-3 2h-5zM1181 751h5l3 1-3 2h-5z"/>

      <!-- lower building -->
      <path class="mg" d="M940 746.500H1155.500V750M872.500 760.500h71v59h-71zM873.500 819V896.500H881M916.500 819V826M916.500 862V891M924 843.500H1148M1155.500 797V830M1155.500 858V891M1192 791.500H1198.500V896.500H1192M916.500 938V941.500H975V937M1097.500 937V941.500H1155.500V938"/>
      <path class="ye" d="M940 751.500H1144M940 756.500H1144M883.500 819V891M888.500 819V891M1184.500 797V891M1188.500 797V891M927 930.500H967M927 935.500H967M1105 930.500H1144M1105 935.500H1144"/>
      <path class="yeold" d="M886.500 819V891M1186.500 797V891M927 933H967M1105 933H1144"/>
      <path class="gy" d="M1144.500 749.500h47v47h-47zM1149.500 754.500h37v37h-37zM881.500 891.500h46v46h-46zM886.500 896.500h36v36h-36zM1144.500 891.500h47v46h-47zM1149.500 896.500h37v36h-37zM876.500 744.500h63v64h-63zM878.500 760V747.500H938M873.500 820V808.500H877M872 750.500H885M872 787.500H885M920.500 819V826M920.500 862V891M1152.500 797V830M1152.500 858V891"/>
      <path class="gy thick2" d="M869 769H946M866 868H929"/>
      <path class="gy bgf" d="M911.500 826.500h12v35h-12zM909.500 841.500h5v5h-5zM1148.500 830.500h12v27h-12zM1157.500 841.500h5v5h-5zM967.500 922.500h137v18h-137zM972.500 927.500h127v8h-127zM993.500 936.500h37v3h-37zM1041.500 936.500h38v3h-38zM884.500 810.500h2v2h-2zM1042.500 753.500h2v2h-2z"/>
      <path class="gy" d="M907.500 762V808M904 799L907.500 808L911 799M911 855.500H878M888 852L878 855.500L888 859M1152 864.500H1185M1175 861L1185 864.500L1175 868M1038.500 816V782M1035 792L1038.500 782L1042 792M1038.500 872V905M1035 895L1038.500 905L1042 895M929.500 941V986.500H973.500V941M979.500 936V979.500H983.500V936"/>
      <path class="gy bgf" d="M923.500 954.500h56v5h-56z"/>
      <g class="slope"><text x="761" y="470">??</text><text x="1109" y="459">??</text><text x="1087" y="655">??</text><text x="1152" y="655">??</text><text x="896" y="853">??</text><text x="1164" y="862">??</text>
      <g transform="rotate(-90)"><text x="-437" y="938">??</text><text x="-524" y="938">??</text><text x="-793" y="905">??</text><text x="-802" y="1035">??</text><text x="-890" y="1035">??</text></g></g>

      <text class="caption" x="871" y="1127">屋面室外机组平面图 1:100</text>
      <path class="wh thick2" d="M861 1133H1034"/><path class="wh" d="M861 1136.500H1034"/>

      <!-- UCS icon and cursor -->
      <path class="wh" d="M59.500 1162V1210.500H109M55.500 1205V1214.500H64.500V1205"/>
      <text class="ucs" x="67" y="1158">Y</text><text class="ucs" x="120" y="1209">X</text>
      <path class="wh" d="M33 1205.500H55M64 1205.500H1602M1615 1205.500H1695M1608.500 133V1199M1608.500 1212V1237M1602.500 1199.500h12v12h-12z"/>
    </svg>
    <div class="viewlabel">[−][俯视][二维线框]</div>
    <div class="viewcube">
      <svg class="ring" aria-hidden="true"><circle cx="61" cy="61" r="54"/></svg>
      <span class="n">北</span><span class="w">西</span><span class="e">东</span><span class="s">南</span>
      <button class="face">上</button>
      <button class="wcs">WCS <span>▽</span></button>
    </div>
  </section>

  <aside class="rail right">
    <span class="hgrip"></span>
    <button class="v" aria-label="删除"><svg class="ic"><path class="yf" d="M5 9l9-9h2v3l-8 9z"/><path class="rf" d="M3 11l3-3 3 3-3 3H3z"/><path class="bl" d="M0 15.500h3M8 15.500h8"/></svg></button>
    <button class="v" aria-label="复制"><svg class="ic"><circle class="ln1" cx="4" cy="4" r="3"/><path class="ln1" d="M9 2.500h4.500V6M11 4l2.500 2L16 4"/><circle class="bl" cx="8" cy="12" r="3"/><circle class="bl" cx="13" cy="12" r="3"/></svg></button>
    <button class="v" aria-label="镜像"><svg class="ic"><path class="ln1" d="M6.500 2v12H1z"/><path class="bl" d="M9.500 2v12H15z"/></svg></button>
    <button class="v" aria-label="偏移"><svg class="ic"><path class="ln1" d="M16 5.500H8c-4 0-4 5 0 5h8"/><path class="bl" d="M16 2.500H7c-9 0-9 11 0 11h9"/></svg></button>
    <button class="v" aria-label="阵列"><svg class="ic"><path class="ln1" d="M1.500 1.500h5v5h-5z"/><path class="bl" d="M9.500 1.500h5v5h-5zM1.500 9.500h5v5h-5zM9.500 9.500h5v5h-5z"/><path class="wf" d="M16 12v4h-4z"/></svg></button>
    <button class="v" aria-label="移动"><svg class="ic"><path class="ln1" d="M8 1v14M1 8h14"/><path class="wf" d="M8 0l3 4H5zM8 16l3-4H5zM0 8l4-3v6zM16 8l-4-3v6z"/></svg></button>
    <button class="v" aria-label="旋转"><svg class="ic"><path class="ln1" d="M9 3a6 6 0 1 0 5 4"/><path class="wf" d="M8 0l5 3-5 3z"/></svg></button>
    <button class="v" aria-label="缩放"><svg class="ic"><path class="bl" d="M.5 6V.5h15v15H10"/><path class="ln1" d="M.5 7.500h8v8h-8z"/></svg></button>
    <button class="v" aria-label="拉伸"><svg class="ic"><path class="ln1" d="M.5.5h6v15h-6zM4 11.500h6M8 9l3 2.500L8 14"/><path class="bl" d="M9 .5h2l4 15H9"/></svg></button>
    <button class="v" aria-label="修剪"><svg class="ic"><path class="bl" d="M0 1.500h16" stroke-dasharray="4 2"/><path class="ln2" d="M4 3l7 8M10 1L8 9"/><circle class="ln1" cx="8" cy="13" r="2"/><circle class="ln1" cx="13" cy="12" r="2"/></svg></button>
    <button class="v" aria-label="延伸"><svg class="ic"><path class="ln1" d="M14.500 2v12M4 7.500h9M10 5l3 2.500L10 10"/><path class="bl" d="M0 11.500h13" stroke-dasharray="3 1"/></svg></button>
    <button class="v" aria-label="打断于点"><svg class="ic"><path class="ln1" d="M10 3.500H.5v10h15v-10H13"/><path class="bl" d="M11.500 1v5"/></svg></button>
    <button class="v" aria-label="打断"><svg class="ic"><path class="ln1" d="M4 3.500H.5v10h15v-10H12"/><path class="bl" d="M5.500 1v5M10.500 1v5"/></svg></button>
    <button class="v" aria-label="合并"><svg class="ic"><path class="ln1" d="M0 8.500h5M11 8.500h5"/><path class="bf" d="M4 6l4 2-4 3zM12 6L8 8l4 3z"/></svg></button>
    <button class="v" aria-label="倒角"><svg class="ic"><path class="ln1" d="M.5 10v6M10 1.500h6"/><path class="bl" d="M1 9l8-7"/></svg></button>
    <button class="v" aria-label="圆角"><svg class="ic"><path class="ln1" d="M.5 11v5M11 1.500h5"/><path class="bl" d="M.5 10C1 5 5 1 10 1.500"/></svg></button>
    <button class="v" aria-label="光顺曲线"><svg class="ic"><path class="ln1" d="M.5 15L1.500 7M14 8l1-7"/><path class="bl" d="M2 6c5-3 4 8 8 8 2 0 4-2 4-5"/></svg></button>
    <button class="v" aria-label="分解"><svg class="ic"><path class="ln1" d="M2.500 6.500h8v8h-8z"/><path class="bl" d="M.5 6v10M4 3.500L7 1h8l-3 2.500zM12.500 6L15 3v9l-2.500 3z"/></svg></button>
  </aside>
</main>

<section class="command">
  <div class="cmdside"><span class="hgrip"></span><button aria-label="关闭命令行"><svg class="ic"><path class="ln2" d="M4 4l7 8M11 4l-7 8"/></svg></button><button aria-label="自定义命令行"><svg class="ic"><path class="ln3" d="M2 14l7-7"/><path class="ln2" d="M10 2c-3 1-3 5 0 6 2 0 4-1 4-3"/></svg></button></div>
  <div class="cmdmain">
    <div class="history">选择注释对象或 [放弃(U)/模式(M)]: *取消*</div>
    <div class="prompt"><svg class="ic" aria-hidden="true"><path class="pf" d="M0 2h16v12H0z"/><path class="pw" d="M1 5h14v8H1z"/><path class="dk" d="M3 7l2 2-2 2M7 11.500h4"/></svg><svg class="ca"><path class="pf" d="M0 6h8l-4 4z"/></svg><input type="text" aria-label="命令" placeholder="键入命令"></div>
  </div>
</section>

<footer class="status">
  <div class="layouts"><button class="on">模型</button><button>布局1</button><button>布局2</button><button class="plus" aria-label="新建布局">+</button></div>
  <div class="modes">
    <div class="grp"><button class="model">模型</button></div>
    <div class="grp"><button class="s" aria-label="栅格"><svg class="ic"><path class="ln1" d="M4.500 0v16M8.500 0v16M12.500 0v16M0 4.500h16M0 8.500h16M0 12.500h16"/></svg></button><button class="s" aria-label="捕捉"><svg class="ic"><path class="wf" d="M1 2h2v2H1zM7 2h2v2H7zM13 2h2v2h-2zM1 7h2v2H1zM7 7h2v2H7zM13 7h2v2h-2zM1 12h2v2H1zM7 12h2v2H7zM13 12h2v2h-2z"/></svg></button><button class="sc" aria-label="捕捉设置"><svg class="ca"><use href="#caret"/></svg></button></div>
    <div class="grp"><button class="s" aria-label="正交"><svg class="ic"><path class="ln1" d="M2.500 0v14.500H16M2 9.500h5.500V14"/></svg></button><button class="s" aria-label="极轴"><svg class="ic"><circle class="ln1" cx="7" cy="9" r="6"/><path class="ln1" d="M7 9.500h9M7 9l7-8"/></svg></button><button class="sc" aria-label="极轴设置"><svg class="ca"><use href="#caret"/></svg></button><button class="s" aria-label="等轴测"><svg class="ic"><path class="ln1" d="M2 1l12 14"/><path class="grs1" d="M8 0v16"/><path class="rs1" d="M8 8l6-6"/></svg></button><button class="sc" aria-label="等轴测设置"><svg class="ca"><use href="#caret"/></svg></button><button class="s" aria-label="对象捕捉追踪"><svg class="ic"><path class="ln1" d="M15 1L1 14.500h15"/><path class="wf" d="M7 7h3v3H7z"/></svg></button><button class="s hl" aria-label="对象捕捉"><svg class="ic"><path class="ln1" d="M5 3.500h10.500v12h-12V6M.5.5h4v4h-4z"/></svg></button><button class="sc" aria-label="捕捉列表"><svg class="ca"><use href="#caret"/></svg></button></div>
    <div class="grp"><button class="s" aria-label="线宽"><svg class="ic"><path class="ln1" d="M0 1.500h16"/><path class="ln2" d="M0 5h9M11 5h5M0 9h9"/><path class="ln3" d="M0 13h9M11 12h5"/></svg></button></div>
    <div class="grp"><button class="s hl" aria-label="注释可见性"><svg class="ic"><use href="#annot" x="-1"/><circle class="ln1" cx="13" cy="4" r="2"/></svg></button><button class="s" aria-label="自动缩放"><svg class="ic"><use href="#annot" x="-1"/><path class="wf" d="M14 0l-3 4h2l-1 4 4-5h-2z"/></svg></button><button class="s" aria-label="注释比例"><svg class="ic"><use href="#annot"/></svg></button><button class="scale">1:1<svg class="ca"><use href="#caret"/></svg></button></div>
    <div class="grp"><button class="s" aria-label="切换工作空间"><svg class="ic"><circle class="gear" cx="8" cy="8" r="6"/><circle class="ln3" cx="8" cy="8" r="4"/></svg></button><button class="sc" aria-label="工作空间列表"><svg class="ca"><use href="#caret"/></svg></button></div>
    <div class="grp"><button class="s" aria-label="注释监视器"><svg class="ic"><path class="ln2" d="M8 0v16M0 8h16"/></svg></button></div>
    <div class="grp"><button class="s" aria-label="隔离对象"><svg class="ic"><path class="ln1" d="M.5.5h6v6h-6zM4 15.500l3-6 3 6z"/><circle class="ln1" cx="13" cy="6" r="3"/></svg></button></div>
    <div class="grp"><button class="s" aria-label="硬件加速"><svg class="ic"><circle class="bd" cx="8" cy="7" r="7"/><path class="ln1" d="M4 0v8M0 4h8"/><path class="yf" d="M0 10h6v6H0z"/><path class="gs" d="M7 11l3 4 6-8"/></svg></button><button class="s" aria-label="图形性能"><svg class="ic"><path class="ln1" d="M2.500 1.500h3v6h-3zM3.500 8v5.500H7M8 3.500h2.500V7"/><path class="orw" d="M11 7l5 9H6z"/></svg></button></div>
    <div class="grp"><button class="s" aria-label="全屏显示"><svg class="ic"><path class="ln1" d="M.5 1.500h15v12H.5zM9 7l4-3M10 4h3v3M7 8l-4 3M3 8v3h3"/></svg></button><button class="s" aria-label="自定义"><svg class="ic"><path class="ln2" d="M0 2h16M0 8h16M0 14h16"/></svg></button></div>
  </div>
</footer>
</div>
</body>
</html>
```
FILE: styles.css
```css
* { box-sizing: border-box; }
body {
  margin: 0;
  background: #222933;
  color: #c8ccd2;
  font: 12px/16px "Noto Sans", "Noto Sans CJK SC", sans-serif;
}
button, input, select { font: inherit; color: inherit; }
button { background: none; border: 0; padding: 0; display: flex; align-items: center; justify-content: center; flex: none; white-space: nowrap; }
.defs { display: none; }
.app {
  min-height: 100vh;
  display: flex;
  flex-direction: column;
  border: 1px solid #1888ad;
}

/* icon paint */
.ic { width: 16px; height: 16px; fill: none; flex: none; display: block; }
.ca { width: 8px; height: 16px; flex: none; display: block; }
.ca.sm { width: 6px; height: 12px; }
.wf { fill: #dcdfe3; stroke: none; }
.sf { fill: #f2f3f5; }
.gf { fill: #a9adb2; stroke: none; }
.df { fill: #343c49; stroke: none; }
.bf { fill: #8ccaf7; stroke: none; }
.bd { fill: #3f79b4; }
.yf { fill: #f6d27c; }
.rf { fill: #ec8a82; }
.grn { fill: #62d68b; }
.tanf { fill: #c9a67c; }
.wfd { fill: #e2e4e7; stroke: #343c49; }
.bfd { fill: #8ccaf7; stroke: #343c49; }
.dfs { fill: #343c49; stroke: #dcdfe3; }
.fillbox { fill: #6a727e; stroke: #dcdfe3; }
.ln1 { stroke: #d6dae0; fill: none; }
.ln2 { stroke: #dfe2e6; stroke-width: 2; fill: none; }
.ln3 { stroke: #dfe2e6; stroke-width: 3; fill: none; }
.bl { stroke: #7fbdea; fill: none; }
.dk { stroke: #4a515c; fill: none; }
.tan { stroke: #c9a67c; stroke-width: 2; }
.gs { stroke: #62c48c; stroke-width: 2; fill: none; }
.grs1 { stroke: #5c9d6c; }
.rs { stroke: #e0525c; stroke-width: 2; }
.rs1 { stroke: #b06060; }
.or { fill: #f5a40c; }
.ors { stroke: #f5a40c; fill: none; }
.ors2 { stroke: #f5a40c; stroke-width: 2; fill: none; }
.orw { fill: #f2a97c; }
.swatch { fill: #00ff00; stroke: #000; }
.gear { stroke: #dfe2e6; stroke-width: 4; stroke-dasharray: 2 3; }
.chevline { stroke: #555; fill: none; }
.pf { fill: #6a6a6a; }
.pw { fill: #eee; }
.logoa { fill: #c8323a; }

/* title bar */
.titlebar { height: 29px; display: flex; align-items: center; color: #e3e6ea; padding-bottom: 2px; }
.quick { display: flex; align-items: center; width: 588px; padding-left: 8px; }
.logo { width: 40px; height: 24px; gap: 4px; justify-content: flex-start; }
.q { width: 24px; height: 24px; }
.qc { width: 12px; height: 24px; }
.dim-icon { opacity: .4; }
.share { gap: 4px; color: #8ccaf7; margin-left: 2px; }
.title { margin: 0; font-size: 12px; font-weight: 400; display: flex; gap: 20px; flex: 1; white-space: nowrap; }
.account { display: flex; align-items: center; }
.play { border: 4px solid transparent; border-left-color: #dfe2e6; border-right: 0; margin-right: 7px; }
.search { width: 178px; height: 21px; border: 0; padding: 0 3px; background: #465062; font-style: italic; }
.search::placeholder { color: #b5bac3; opacity: 1; }
.user { gap: 6px; padding-right: 6px; }
.account > .search + .q { margin-right: 4px; }
.vline { width: 1px; height: 20px; background: #4b5362; margin: 0 5px 0 4px; }
.help { width: 16px; height: 16px; border-radius: 50%; background: #dcdfe3; color: #343c49; font-weight: 700; line-height: 16px; text-align: center; }
.winctl { display: flex; gap: 8px; margin-left: 64px; padding-right: 8px; }
.winctl button { width: 16px; }

/* menus and file tabs */
.menubar { height: 19px; display: flex; align-items: center; padding: 0 3px 0 17px; gap: 25px; border-bottom: 1px solid #434c5a; }
.menubar a { color: #b9bec6; text-decoration: none; line-height: 18px; white-space: nowrap; }
.docctl { margin-left: auto; display: flex; gap: 2px; }
.tabs { height: 25px; display: flex; align-items: flex-end; padding-left: 24px; }
.tab { height: 21px; width: 124px; background: #2c3543; border-radius: 10px 10px 0 0; justify-content: flex-start; padding-left: 10px; color: #c6cad1; }
.tab.on { width: 192px; background: #3b4453; color: #fff; font-weight: 700; gap: 8px; }
.tab .x { font-weight: 400; color: #a9afb9; }
.tab.add { width: 30px; background: #2c3543; font-size: 16px; }

/* toolbars */
.bars { margin: 0 3px; height: 59px; background: #3b4453; padding-top: 3px; display: flex; flex-direction: column; gap: 3px; }
.bar { height: 25px; display: flex; align-items: center; border: 1px solid #2c3440; border-left: 0; width: fit-content; }
.bar:first-child { border-right: 0; }
.grip { width: 5px; height: 15px; margin: 0 2px 0 1px; flex: none; background: radial-gradient(circle, #aab0ba 1px, transparent 1px) 0 0 / 3px 3px; }
.grip.wide { margin: 0 1px 0 4px; }
.hgrip { display: block; width: 14px; height: 6px; flex: none; background: radial-gradient(circle, #c0c5cd 1px, transparent 1px) 0 0 / 3px 3px; }
.t { width: 23px; height: 23px; }
.tc { width: 13px; height: 23px; }
.sep { width: 6px; height: 19px; flex: none; background: linear-gradient(#e8eaed, #e8eaed) center / 1px 100% no-repeat; }
.combo { height: 23px; background: #fdfdfd; color: #111; display: flex; align-items: center; flex: none; padding-right: 4px; }
.combo select { appearance: none; border: 0; background: none; flex: 1; min-width: 0; height: 23px; padding: 0 4px; outline: 0; opacity: 1; }
.ch { width: 9px; height: 14px; flex: none; }
.lic { width: 94px; height: 16px; flex: none; margin-left: 4px; fill: none; }
.lic + select { padding-left: 0; }
.layer { width: 300px; }
.color { width: 150px; }
.sw { width: 14px; height: 14px; background: #00ff00; border: 1px solid #000; margin-left: 3px; }
.ltype { width: 160px; }
.lweight { width: 125px; }
.dash { width: 60px; height: 1px; background: #000; margin: 0 2px 0 5px; }
.lweight .dash { width: 35px; }
.plot { width: 119px; color: #777; }
.plot select { padding-left: 10px; color: #777; }
.plot .ch { opacity: .4; }
.split { width: 6px; height: 19px; flex: none; background: linear-gradient(#e8eaed, #e8eaed) center / 1px 100% no-repeat; }
.dimstyle { width: 120px; margin-left: 6px; }
.dimstyle select { padding-left: 19px; font-size: 13px; }

/* work area */
.work { flex: 1; display: flex; margin: 0 3px; min-height: 560px; background: #3b4453; }
.rail { display: flex; flex-direction: column; align-items: center; height: fit-content; border: 1px solid #2c3440; border-top: 0; padding: 1px 0 4px; flex: none; }
.rail .hgrip { margin-bottom: 2px; }
.left { width: 24px; margin: 0 5px 0 0; }
.right { width: 24px; margin: 0 4px; }
.v { width: 22px; height: 22px; }
.canvas { flex: 1; position: relative; min-width: 0; background: #212830; overflow: hidden; }
.drawing { position: absolute; inset: 0; width: 100%; height: 100%; fill: none; }
.viewlabel { position: absolute; left: 3px; top: 5px; color: #040608; }

/* drawing layers */
.cy { stroke: #00d9d9; }
.thick { stroke-width: 3; }
.cy.thick { stroke: #00ffff; }
.thick2 { stroke-width: 2; }
.wh { stroke: #fff; }
.gy { stroke: #c4c4c4; }
.gr { stroke: #00f000; }
.mg { stroke: #f800f8; }
.ye { stroke: #ffff30; }
.yeold { stroke: #8d8d18; }
.bu { stroke: #0000e8; }
.bgf { fill: #212830; }
.tick { stroke: #00ff00; stroke-width: 4; stroke-linecap: round; }
.bub { stroke: #00f000; }
.fan, .cyan { fill: #00f0ff; }
.axis { fill: #fff; text-anchor: middle; font: bold 9px/9px "Liberation Serif", serif; }
.dim { fill: #fff; text-anchor: middle; font: bold 7px/7px "Liberation Sans Narrow", "Liberation Sans", sans-serif; }
.cell { fill: #fff; font: bold 7px/8px "Noto Sans CJK SC", sans-serif; }
.soft { fill: #bdbdbd; }
.sign { fill: #bdbdbd; font: 10px/12px "Noto Sans CJK SC", sans-serif; }
.sheetname { fill: #e4e4e4; font: 11px/12px "Noto Sans CJK SC", sans-serif; }
.slope { fill: #12698c; text-anchor: middle; font: 10px/10px "Liberation Sans", sans-serif; }
.unit { fill: #00f000; text-anchor: middle; font: bold 6px/6px "Liberation Sans", sans-serif; }
.caption { fill: #ffff20; font: bold 13px/16px "Noto Sans CJK SC", sans-serif; }
.ucs { fill: #fff; text-anchor: middle; font: 300 18px/18px "Noto Sans CJK SC", sans-serif; }

/* view cube */
.viewcube { position: absolute; top: 16px; right: 17px; width: 132px; height: 176px; color: #9b9ea3; font-size: 18px; line-height: 20px; }
.viewcube > * { position: absolute; }
.ring { left: 5px; top: 5px; width: 122px; height: 122px; fill: none; stroke: rgba(150, 150, 155, .28); stroke-width: 13; }
.n { left: 57px; top: 0; }
.s { left: 57px; top: 113px; }
.viewcube .w { left: 0; top: 57px; }
.viewcube .e { right: 0; top: 57px; }
.face { left: 40px; top: 41px; width: 52px; height: 51px; border: 3px solid #adafb3; background: #9ea3ab; color: #4b4e57; font-size: 32px; line-height: 36px; }
.wcs { left: 42px; top: 153px; width: 48px; height: 17px; border: 1px solid #8c8e9b; border-radius: 4px; background: #a2a4b2; color: #666a77; font-size: 11px; line-height: 14px; gap: 5px; }
.wcs span { font-size: 8px; color: #d5d7dd; }

/* command line */
.command { margin: 0 3px; display: flex; height: 57px; border-top: 3px solid #474d58; }
.cmdside { width: 24px; background: #2b323d; display: flex; flex-direction: column; align-items: center; padding-top: 3px; }
.cmdside button { height: 20px; margin-top: 2px; }
.cmdside button:last-child { margin-top: 4px; }
.cmdmain { flex: 1; margin-right: 1px; }
.history { height: 30px; background: #c8c8c8; border-bottom: 1px solid #16191e; color: #161616; padding: 2px 0 0 3px; font: 17px/30px "Liberation Mono", "Noto Sans CJK SC", monospace; white-space: nowrap; }
.prompt { height: 24px; background: #fff; display: flex; align-items: center; padding-left: 5px; gap: 3px; }
.prompt input { flex: 1; border: 0; outline: 0; padding: 0 0 0 4px; background: none; font: italic 18px/24px "Noto Sans CJK SC", sans-serif; color: #222; height: 24px; }
.prompt input::placeholder { color: #858585; opacity: 1; }

/* status bar */
.status { height: 33px; display: flex; justify-content: space-between; padding: 3px 4px 0; }
.layouts { display: flex; height: 18px; padding-left: 13px; gap: 3px; }
.layouts button { height: 18px; padding: 0 11px; background: #2a323f; border-radius: 0 0 8px 8px; color: #b9bec6; }
.layouts .on { background: #3b4453; color: #fff; font-weight: 700; padding: 0 9px; }
.layouts .plus { font-size: 16px; padding: 0 8px; }
.modes { display: flex; gap: 3px; height: 25px; }
.grp { display: flex; background: #3b4453; }
.s { width: 24px; height: 25px; }
.sc { width: 16px; height: 25px; }
.hl { background: #5c8fc9; }
.model { padding: 0 3px; color: #fff; }
.scale { gap: 3px; width: 32px; color: #e3e6ea; }
```
